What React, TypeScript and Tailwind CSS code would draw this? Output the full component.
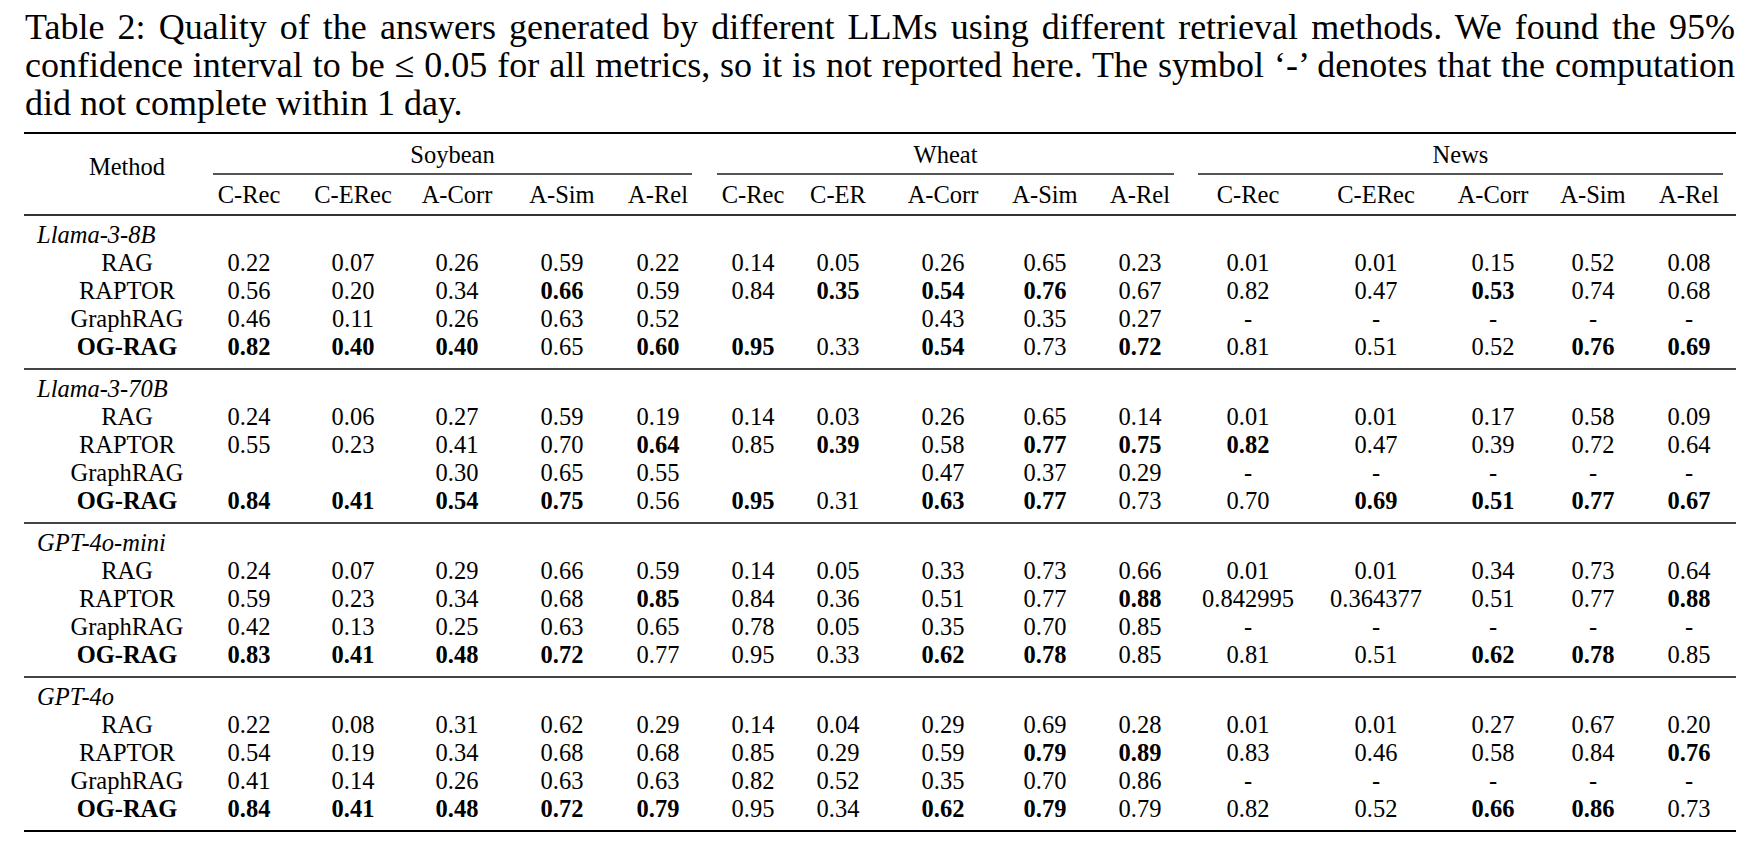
// horizontal centres of the 15 data columns, in page pixels
const CENTERS = [249, 353, 457, 562, 658, 753, 838, 943, 1045, 1140, 1248, 1376, 1493, 1593, 1689];
const METHOD_END = 200;

const METRICS = [
  "C-Rec", "C-ERec", "A-Corr", "A-Sim", "A-Rel",
  "C-Rec", "C-ER", "A-Corr", "A-Sim", "A-Rel",
  "C-Rec", "C-ERec", "A-Corr", "A-Sim", "A-Rel",
];

// "*" prefix marks a bold cell, "_" an empty one
const GROUPS: { name: string; rows: [string, string][] }[] = [
  {
    name: "Llama-3-8B",
    rows: [
      ["RAG", "0.22 0.07 0.26 0.59 0.22 0.14 0.05 0.26 0.65 0.23 0.01 0.01 0.15 0.52 0.08"],
      ["RAPTOR", "0.56 0.20 0.34 *0.66 0.59 0.84 *0.35 *0.54 *0.76 0.67 0.82 0.47 *0.53 0.74 0.68"],
      ["GraphRAG", "0.46 0.11 0.26 0.63 0.52 _ _ 0.43 0.35 0.27 - - - - -"],
      ["OG-RAG", "*0.82 *0.40 *0.40 0.65 *0.60 *0.95 0.33 *0.54 0.73 *0.72 0.81 0.51 0.52 *0.76 *0.69"],
    ],
  },
  {
    name: "Llama-3-70B",
    rows: [
      ["RAG", "0.24 0.06 0.27 0.59 0.19 0.14 0.03 0.26 0.65 0.14 0.01 0.01 0.17 0.58 0.09"],
      ["RAPTOR", "0.55 0.23 0.41 0.70 *0.64 0.85 *0.39 0.58 *0.77 *0.75 *0.82 0.47 0.39 0.72 0.64"],
      ["GraphRAG", "_ _ 0.30 0.65 0.55 _ _ 0.47 0.37 0.29 - - - - -"],
      ["OG-RAG", "*0.84 *0.41 *0.54 *0.75 0.56 *0.95 0.31 *0.63 *0.77 0.73 0.70 *0.69 *0.51 *0.77 *0.67"],
    ],
  },
  {
    name: "GPT-4o-mini",
    rows: [
      ["RAG", "0.24 0.07 0.29 0.66 0.59 0.14 0.05 0.33 0.73 0.66 0.01 0.01 0.34 0.73 0.64"],
      ["RAPTOR", "0.59 0.23 0.34 0.68 *0.85 0.84 0.36 0.51 0.77 *0.88 0.842995 0.364377 0.51 0.77 *0.88"],
      ["GraphRAG", "0.42 0.13 0.25 0.63 0.65 0.78 0.05 0.35 0.70 0.85 - - - - -"],
      ["OG-RAG", "*0.83 *0.41 *0.48 *0.72 0.77 0.95 0.33 *0.62 *0.78 0.85 0.81 0.51 *0.62 *0.78 0.85"],
    ],
  },
  {
    name: "GPT-4o",
    rows: [
      ["RAG", "0.22 0.08 0.31 0.62 0.29 0.14 0.04 0.29 0.69 0.28 0.01 0.01 0.27 0.67 0.20"],
      ["RAPTOR", "0.54 0.19 0.34 0.68 0.68 0.85 0.29 0.59 *0.79 *0.89 0.83 0.46 0.58 0.84 *0.76"],
      ["GraphRAG", "0.41 0.14 0.26 0.63 0.63 0.82 0.52 0.35 0.70 0.86 - - - - -"],
      ["OG-RAG", "*0.84 *0.41 *0.48 *0.72 *0.79 0.95 0.34 *0.62 *0.79 0.79 0.82 0.52 *0.66 *0.86 0.73"],
    ],
  },
];

// each cell is a 40px box centred on its column; wider text overflows evenly
function Cell({ v, i }: { v: string; i: number }) {
  const bold = v.startsWith("*");
  const text = v === "_" ? "" : bold ? v.slice(1) : v;
  const prevEnd = i === 0 ? METHOD_END : CENTERS[i - 1] + 20;
  return (
    <div
      className={`flex w-[40px] shrink-0 justify-center whitespace-nowrap ${bold ? "font-bold" : ""}`}
      style={{ marginLeft: CENTERS[i] - 20 - prevEnd }}
    >
      {text}
    </div>
  );
}

function DataRow({ method, values }: { method: string; values: string }) {
  const bold = method === "OG-RAG";
  return (
    <div className="flex h-[28px] items-center">
      <div className={`w-[176px] shrink-0 pl-[30px] text-center whitespace-nowrap ${bold ? "font-bold" : ""}`}>{method}</div>
      {values.split(" ").map((v, i) => (
        <Cell key={i} v={v} i={i} />
      ))}
    </div>
  );
}

export default function App() {
  return (
    <div className="w-[1756px] h-[852px] bg-white text-black [font-family:'Liberation_Serif','Times_New_Roman',serif] overflow-hidden">
      {/* Caption */}
      <div className="pt-[8px] pl-[25px] w-[1735px] text-[36px] leading-[38px]">
        <p className="whitespace-nowrap text-justify [text-align-last:justify]">
          Table 2: Quality of the answers generated by different LLMs using different retrieval methods. We found the 95%
        </p>
        <p className="whitespace-nowrap text-justify [text-align-last:justify]">
          confidence interval to be ≤ 0.05 for all metrics, so it is not reported here. The symbol ‘-’ denotes that the computation
        </p>
        <p>did not complete within 1 day.</p>
      </div>

      {/* Table */}
      <div className="ml-[24px] mt-[10px] w-[1712px] text-[24.5px] leading-[28px]">
        <div className="h-[2px] bg-black" />

        {/* Header */}
        <div className="flex pt-[7px]">
          <div className="w-[176px] shrink-0 pl-[30px] text-center pt-[12px]">Method</div>
          <div className="flex flex-col">
            <div className="flex">
              <div className="w-[506px] pl-[13px] pr-[14px]">
                <div className="h-[28px] text-center">Soybean</div>
                <div className="mt-[4px] h-[1.5px] bg-[#555]" />
              </div>
              <div className="w-[488px] pl-[11px] pr-[20px]">
                <div className="h-[28px] text-center">Wheat</div>
                <div className="mt-[4px] h-[1.5px] bg-[#555]" />
              </div>
              <div className="w-[542px] pl-[4px] pr-[13px]">
                <div className="h-[28px] text-center">News</div>
                <div className="mt-[4px] h-[1.5px] bg-[#555]" />
              </div>
            </div>
            <div className="flex mt-[6px] h-[28px] items-center">
              {METRICS.map((m, i) => (
                <Cell key={i} v={m} i={i} />
              ))}
            </div>
          </div>
        </div>

        {GROUPS.map((g, gi) => (
          <div key={g.name}>
            <div className={`mt-[5px] h-[2px] ${gi === 0 ? "bg-[#333]" : "bg-[#444]"}`} />
            <div className="pt-[5px] pb-[2px]">
              <div className="h-[28px] pl-[13px] italic whitespace-nowrap">{g.name}</div>
              {g.rows.map(([m, v]) => (
                <DataRow key={m} method={m} values={v} />
              ))}
            </div>
          </div>
        ))}
        <div className="mt-[5px] h-[2px] bg-black" />
      </div>
    </div>
  );
}
